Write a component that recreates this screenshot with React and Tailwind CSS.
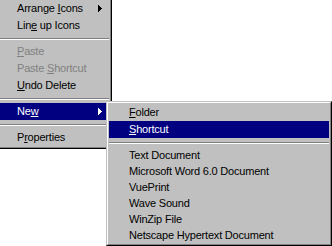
import React from "react";

// Win95-style context menu with the "New" cascade open

const leftMenu = [
  { parts: ["Arrange ", "I", "cons"], arrow: true },
  { parts: ["Lin", "e", " up Icons"] },
  { sep: true },
  { parts: ["", "P", "aste"], disabled: true },
  { parts: ["Paste ", "S", "hortcut"], disabled: true },
  { parts: ["", "U", "ndo Delete"] },
  { sep: true },
  { parts: ["Ne", "w", ""], arrow: true, active: true },
  { sep: true },
  { parts: ["P", "r", "operties"] },
];

const subMenu = [
  { parts: ["", "F", "older"] },
  { parts: ["", "S", "hortcut"], active: true },
  { sep: true },
  { parts: ["Text Document"], h: 16 },
  { parts: ["Microsoft Word 6.0 Document"], h: 16 },
  { parts: ["VuePrint"], h: 16 },
  { parts: ["Wave Sound"], h: 16 },
  { parts: ["WinZip File"], h: 16 },
  { parts: ["Netscape Hypertext Document"], h: 16 },
];

function Arrow({ color }) {
  return (
    <svg width="4" height="7" viewBox="0 0 4 7" shapeRendering="crispEdges">
      <rect x="0" y="0" width="1" height="7" fill={color} />
      <rect x="1" y="1" width="1" height="5" fill={color} />
      <rect x="2" y="2" width="1" height="3" fill={color} />
      <rect x="3" y="3" width="1" height="1" fill={color} />
    </svg>
  );
}

function Item({ item }) {
  if (item.sep) {
    return (
      <div className="h-[9px] flex flex-col pt-[4px]">
        <div className="h-px bg-[#808080]" />
        <div className="h-px bg-white" />
      </div>
    );
  }
  const [a, u, b] = item.parts;
  const color = item.active
    ? "bg-[#000080] text-white"
    : item.disabled
    ? "text-[#808080]"
    : "text-black";
  return (
    <div
      className={`flex items-center justify-between pl-[20px] pr-[7px] whitespace-nowrap ${color} ${
        item.h === 16 ? "h-[16px] leading-[16px]" : "h-[17px] leading-[17px]"
      }`}
    >
      <span>
        {a}
        {u && <span className="underline underline-offset-[1px] decoration-1">{u}</span>}
        {b}
      </span>
      {item.arrow && <Arrow color={item.active ? "#ffffff" : "#000000"} />}
    </div>
  );
}

function MenuFrame({ className, children }) {
  return (
    <div className={`bg-[#c0c0c0] border border-t-[#c0c0c0] border-l-[#c0c0c0] border-r-black border-b-black ${className}`}>
      <div className="border border-t-white border-l-white border-r-[#808080] border-b-[#808080] p-px">
        {children}
      </div>
    </div>
  );
}

export default function App() {
  return (
    <div className="relative w-[332px] h-[246px] overflow-hidden bg-white font-['Liberation_Sans',Arial,sans-serif] text-[11px] tracking-[-0.2px]">
      <MenuFrame className="-mt-[3px] -ml-[6px] w-[118px]">
        {leftMenu.map((it, i) => (
          <Item key={i} item={it} />
        ))}
      </MenuFrame>

      <MenuFrame className="absolute left-[106px] top-[101px] w-[226px]">
        {subMenu.map((it, i) => (
          <Item key={i} item={it} />
        ))}
      </MenuFrame>
    </div>
  );
}
